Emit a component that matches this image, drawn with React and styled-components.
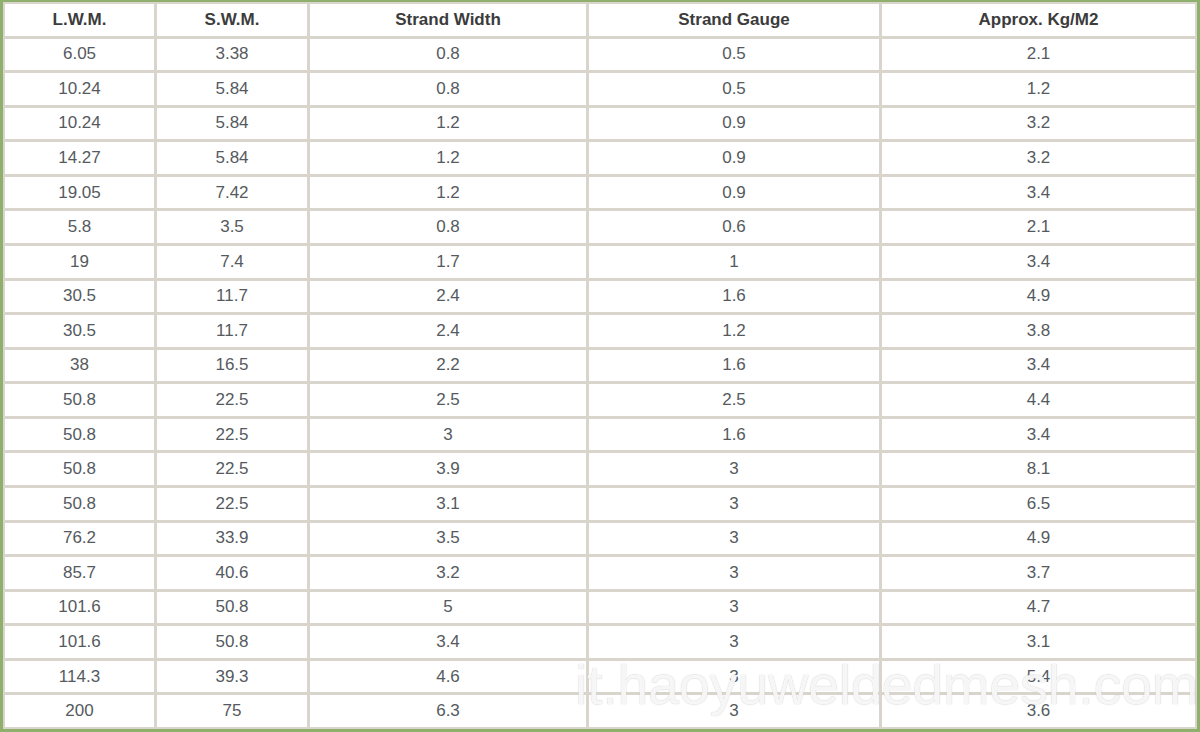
import React from 'react';
import styled, { createGlobalStyle } from 'styled-components';

const GlobalStyle = createGlobalStyle`
  html, body {
    margin: 0;
    padding: 0;
    background: #fff;
  }
`;

const Frame = styled.div`
  position: relative;
  width: 1200px;
  height: 732px;
  box-sizing: border-box;
  border: 3px solid #8fb06c;
  border-top-width: 2px;
  background: #fff;
  overflow: hidden;
`;

const Grid = styled.div`
  display: grid;
  grid-template-columns: 149fr 150fr 276fr 290fr 313fr;
  grid-auto-rows: 1fr;
  gap: 3px;
  padding: 2px;
  height: 100%;
  box-sizing: border-box;
  background: #d9d5cd;
`;

const Cell = styled.div`
  background: #fff;
  display: flex;
  align-items: center;
  justify-content: center;
  font-family: "Liberation Sans", Arial, sans-serif;
  font-size: 17px;
  font-weight: ${(p) => (p.$head ? 700 : 400)};
  color: ${(p) => (p.$head ? '#3c3c3c' : '#555a60')};
`;

const Watermark = styled.div`
  position: absolute;
  left: 572px;
  top: 650px;
  font-family: "Liberation Sans", Arial, sans-serif;
  font-size: 56px;
  font-weight: 400;
  letter-spacing: -0.4px;
  color: rgba(255, 255, 255, 0.88);
  text-shadow: 0 0 1px rgba(150, 150, 150, 0.7);
  pointer-events: none;
  white-space: nowrap;
`;

const head = ['L.W.M.', 'S.W.M.', 'Strand Width', 'Strand Gauge', 'Approx. Kg/M2'];

const rows = [
  ['6.05', '3.38', '0.8', '0.5', '2.1'],
  ['10.24', '5.84', '0.8', '0.5', '1.2'],
  ['10.24', '5.84', '1.2', '0.9', '3.2'],
  ['14.27', '5.84', '1.2', '0.9', '3.2'],
  ['19.05', '7.42', '1.2', '0.9', '3.4'],
  ['5.8', '3.5', '0.8', '0.6', '2.1'],
  ['19', '7.4', '1.7', '1', '3.4'],
  ['30.5', '11.7', '2.4', '1.6', '4.9'],
  ['30.5', '11.7', '2.4', '1.2', '3.8'],
  ['38', '16.5', '2.2', '1.6', '3.4'],
  ['50.8', '22.5', '2.5', '2.5', '4.4'],
  ['50.8', '22.5', '3', '1.6', '3.4'],
  ['50.8', '22.5', '3.9', '3', '8.1'],
  ['50.8', '22.5', '3.1', '3', '6.5'],
  ['76.2', '33.9', '3.5', '3', '4.9'],
  ['85.7', '40.6', '3.2', '3', '3.7'],
  ['101.6', '50.8', '5', '3', '4.7'],
  ['101.6', '50.8', '3.4', '3', '3.1'],
  ['114.3', '39.3', '4.6', '3', '5.4'],
  ['200', '75', '6.3', '3', '3.6'],
];

export default function App() {
  return (
    <>
      <GlobalStyle />
      <Frame>
        <Grid>
          {head.map((h) => (
            <Cell key={h} $head>{h}</Cell>
          ))}
          {rows.map((r, i) =>
            r.map((v, j) => <Cell key={`${i}-${j}`}>{v}</Cell>)
          )}
        </Grid>
        <Watermark>it.haoyuweldedmesh.com</Watermark>
      </Frame>
    </>
  );
}
